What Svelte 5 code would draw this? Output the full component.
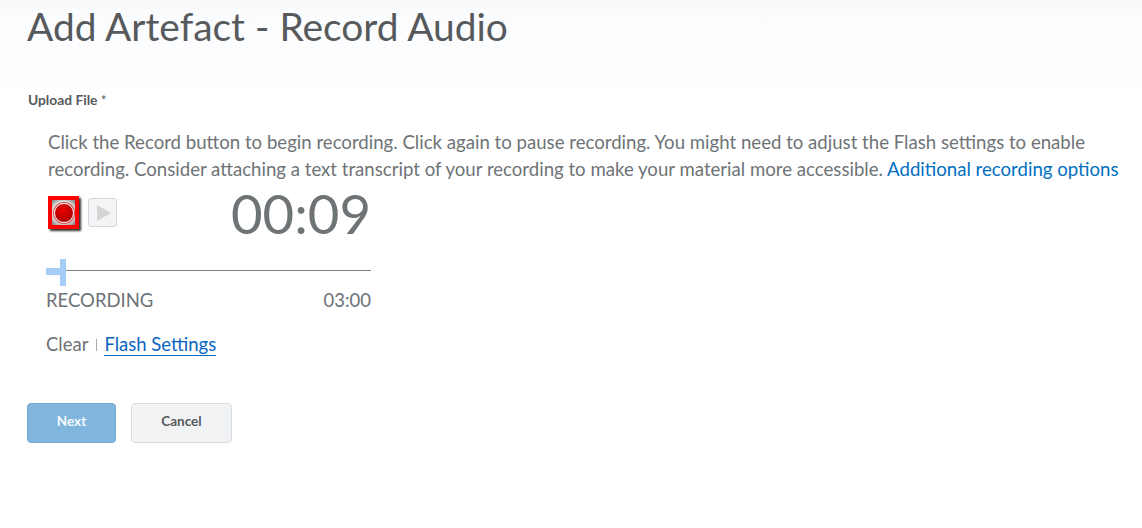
<script>
  const elapsed = '00:09';
  const limit = '03:00';
</script>

<main class="page">
  <header class="banner">
    <h1>Add Artefact - Record Audio</h1>
  </header>

  <div class="label">Upload File <span class="star">*</span></div>

  <p class="intro">
    Click the Record button to begin recording. Click again to pause recording. You might need to adjust the Flash settings to enable recording. Consider attaching a text transcript of your recording to make your material more accessible. <a href="#options">Additional recording options</a>
  </p>

  <section class="recorder">
    <div class="controls">
      <div class="buttons">
        <button class="record" aria-label="Record"><span class="dot"></span></button>
        <button class="play" aria-label="Play">
          <svg width="14" height="16" viewBox="0 0 14 16"><path d="M0 0 L14 8 L0 16 Z" fill="#d2d4d6" /></svg>
        </button>
      </div>
      <div class="time">{elapsed}</div>
    </div>
    <div class="track">
      <div class="line"></div>
      <div class="thumb-h"></div>
      <div class="thumb-v"></div>
    </div>
    <div class="status">
      <span>RECORDING</span>
      <span>{limit}</span>
    </div>
  </section>

  <div class="links">
    <span>Clear</span>
    <span class="sep"></span>
    <a href="#flash">Flash Settings</a>
  </div>

  <div class="actions">
    <button class="next">Next</button>
    <button class="cancel">Cancel</button>
  </div>
</main>

<style>
  :global(body) {
    margin: 0;
    background: #fff;
  }

  .page {
    height: 528px;
    overflow: hidden;
    font-family: Lato, sans-serif;
    color: #6e7376;
    background: linear-gradient(#f9fafb 0, #f9fafb 9px, #fbfcfe 10px, #ffffff 110px);
    box-sizing: border-box;
    padding: 0 0 0 27px;
  }

  .banner {
    height: 92px;
  }

  h1 {
    margin: 0;
    padding-top: 4px;
    font-size: 38.9px;
    line-height: 44px;
    font-weight: 400;
    color: #565a5c;
  }

  .label {
    margin-left: 1px;
    font-size: 13.8px;
    line-height: 15px;
    font-weight: 700;
    color: #565a5c;
  }

  .star {
    font-weight: 400;
  }

  .intro {
    margin: 22px 0 0 21px;
    width: 1085px;
    font-size: 18.62px;
    line-height: 27px;
    color: #6e7376;
  }

  a {
    color: #006fbf;
    text-decoration: none;
  }

  .recorder {
    width: 325px;
    margin: 0 0 0 19px;
  }

  .controls {
    display: flex;
    justify-content: space-between;
    height: 74px;
  }

  .buttons {
    display: flex;
    align-items: flex-start;
    gap: 9px;
    padding: 13px 0 0 2px;
  }

  .record {
    width: 31px;
    height: 33px;
    padding: 0;
    box-sizing: border-box;
    border: 4px solid #f00;
    background: radial-gradient(circle, #e8e8e8 60%, #777 100%);
    box-shadow: 2px 2px 2px #333;
    display: flex;
    align-items: center;
    justify-content: center;
  }

  .dot {
    width: 18px;
    height: 18px;
    box-sizing: content-box;
    border-radius: 50%;
    background: radial-gradient(circle at 45% 35%, #ea0000, #9c0000);
    border: 1px solid #f8e4e4;
    box-shadow: 0 0 0 1px #e04848;
    flex: none;
  }

  .play {
    width: 29px;
    height: 29px;
    margin-top: 2px;
    padding: 0 0 0 2px;
    box-sizing: border-box;
    background: #f3f4f5;
    border: 1px solid #d3d5d8;
    border-radius: 3px;
    display: flex;
    align-items: center;
    justify-content: center;
  }

  .time {
    font-size: 54.5px;
    line-height: 61px;
    color: #6e7376;
  }

  .track {
    position: relative;
    height: 28px;
  }

  .line {
    position: absolute;
    left: 0;
    right: 0;
    top: 13px;
    height: 1px;
    background: #808080;
  }

  .thumb-h {
    position: absolute;
    left: 0;
    top: 11px;
    width: 20px;
    height: 7px;
    background: #a6cdf7;
  }

  .thumb-v {
    position: absolute;
    left: 14px;
    top: 2px;
    width: 6px;
    height: 27px;
    background: #a6cdf7;
  }

  .status {
    display: flex;
    justify-content: space-between;
    font-size: 18.5px;
    line-height: 24px;
    margin-top: 3px;
  }

  .links {
    display: flex;
    align-items: center;
    margin: 20px 0 0 19px;
    font-size: 18.5px;
    line-height: 24px;
  }

  .sep {
    width: 1px;
    height: 12px;
    background: #a8abae;
    margin: 2px 7px 0 8px;
  }

  .links a {
    color: #0a64c2;
    border-bottom: 1px solid #0a64c2;
    line-height: 22px;
  }

  .actions {
    display: flex;
    gap: 15px;
    margin-top: 47px;
  }

  .actions button {
    height: 40px;
    box-sizing: border-box;
    font-family: Lato, sans-serif;
    font-size: 13.5px;
    font-weight: 700;
    border-radius: 4px;
    padding: 0 0 4px;
  }

  .next {
    width: 89px;
    background: #80b6de;
    border: 1px solid #74a9d2;
    color: #f6fafd;
  }

  .cancel {
    width: 101px;
    background: #f1f2f4;
    border: 1px solid #d8dbe2;
    color: #565a5c;
  }
</style>
